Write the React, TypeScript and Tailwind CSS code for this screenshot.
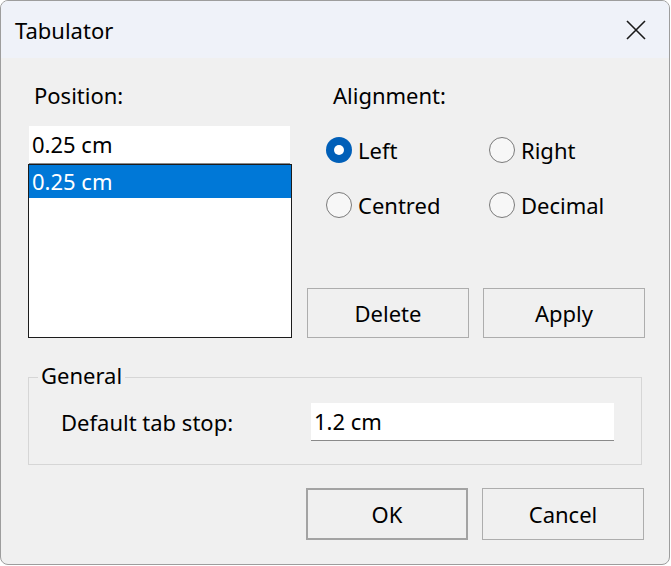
import React from "react";

function Radio({ label, checked }: { label: string; checked?: boolean }) {
    return (
        <div className="flex items-center gap-[6px] h-[26px] leading-none">
            {checked ? (
                <span className="w-[26px] h-[26px] rounded-full bg-[#005fb8] flex items-center justify-center">
                    <span className="w-[10px] h-[10px] rounded-full bg-white" />
                </span>
            ) : (
                <span className="w-[26px] h-[26px] rounded-full border-[1.5px] border-[#7a7a7a] bg-[#f7f7f7]" />
            )}
            <span>{label}</span>
        </div>
    );
}

export default function App() {
    return (
        <div className="w-[671px] h-[566px] bg-white text-[22px] text-black" style={{ fontFamily: '"Segoe UI", "Noto Sans", sans-serif' }}>
            <div className="w-[670px] h-[565px] rounded-[8px] border border-[#9d9d9d] bg-[#f0f0f0] overflow-hidden flex flex-col">
                <div className="h-[57px] bg-[#eff2f9] flex items-center justify-between pl-[14px] pr-[22px] shrink-0">
                    <span className="leading-none">Tabulator</span>
                    <svg width="22" height="22" viewBox="0 0 22 22">
                        <path d="M2 2 L20 20 M20 2 L2 20" stroke="#1a1a1a" strokeWidth="1.6" />
                    </svg>
                </div>

                <div className="flex pl-[27px] pt-[26px]">
                    <div className="w-[265px] flex flex-col">
                        <div className="pl-[6px] leading-none h-[42px]">Position:</div>
                        <div className="w-[261px] h-[38px] bg-white border-b border-[#8a8a8a] flex items-center pl-[3px] ml-[1px]">0.25 cm</div>
                        <div className="w-[264px] h-[174px] bg-white border border-[#1c1c1c]">
                            <div className="h-[33px] bg-[#0078d7] text-white flex items-center pl-[3px]">0.25 cm</div>
                        </div>
                    </div>

                    <div className="ml-[14px] flex flex-col">
                        <div className="pl-[26px] leading-none h-[53px]">Alignment:</div>
                        <div className="pl-[19px] grid grid-cols-[163px_auto] gap-y-[29px]">
                            <Radio label="Left" checked />
                            <Radio label="Right" />
                            <Radio label="Centred" />
                            <Radio label="Decimal" />
                        </div>
                        <div className="flex gap-[14px] mt-[70px]">
                            <button className="w-[162px] h-[50px] border border-[#adadad] bg-[#f0f0f0]">Delete</button>
                            <button className="w-[162px] h-[50px] border border-[#adadad] bg-[#f0f0f0]">Apply</button>
                        </div>
                    </div>
                </div>

                <div className="mx-[27px] mt-[39px] h-[88px] border border-[#d6d6d6] relative">
                    <span className="absolute left-[9px] top-[-14px] bg-[#f0f0f0] px-[3px] leading-none">General</span>
                    <div className="flex items-center mt-[25px]">
                        <span className="ml-[32px] w-[250px]">Default tab stop:</span>
                        <div className="w-[303px] h-[38px] bg-white border-b border-[#8a8a8a] flex items-center pl-[3px]">1.2 cm</div>
                    </div>
                </div>

                <div className="flex justify-end gap-[14px] pr-[25px] mt-[23px]">
                    <button className="w-[162px] h-[52px] border-2 border-[#a3a3a3] bg-[#f0f0f0]">OK</button>
                    <button className="w-[162px] h-[52px] border border-[#adadad] bg-[#f0f0f0]">Cancel</button>
                </div>
            </div>
        </div>
    );
}
